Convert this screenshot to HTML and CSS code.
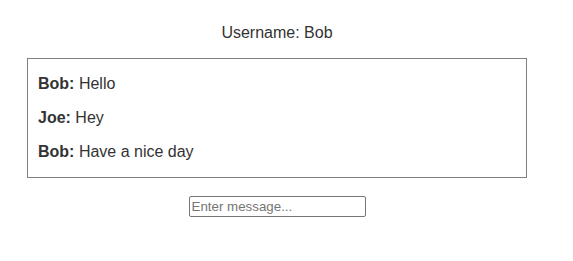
FILE: index.html
```html
<!DOCTYPE html>
<html lang="en">
<head>
    <meta charset="UTF-8">
    <title>Chat</title>
    <link rel="stylesheet" href="styles.css">
</head>
<body>

<div class="app">
    <p class="username">Username: Bob</p>
    <div class="messages">
        <p><b>Bob:</b> Hello</p>
        <p><b>Joe:</b> Hey</p>
        <p><b>Bob:</b> Have a nice day</p>
    </div>
    <div class="send">
        <input type="text" placeholder="Enter message...">
    </div>
</div>

</body>
</html>
```

FILE: styles.css
```css
body {
    font-family: 'Liberation Sans', Arial, sans-serif;
    font-size: 16px;
    color: #333;
    background: #fff;
    margin: 0;
    padding-top: 8px;
}
.app {
    width: 554px;
    text-align: center;
}
.username {
    margin: 16px 0;
}
.messages {
    width: 500px;
    box-sizing: border-box;
    margin: 0 auto;
    padding: 0 10px;
    border: 1px solid #808080;
    text-align: left;
}
.messages p {
    margin: 16px 0;
}
.send {
    margin-top: 18px;
}
.send input {
    width: 177px;
    height: 21px;
    box-sizing: border-box;
    font-family: 'Liberation Sans', Arial, sans-serif;
    font-size: 13.33px;
    padding: 1px 2px;
    border: 1px solid #767676;
    border-radius: 2px;
}
```
